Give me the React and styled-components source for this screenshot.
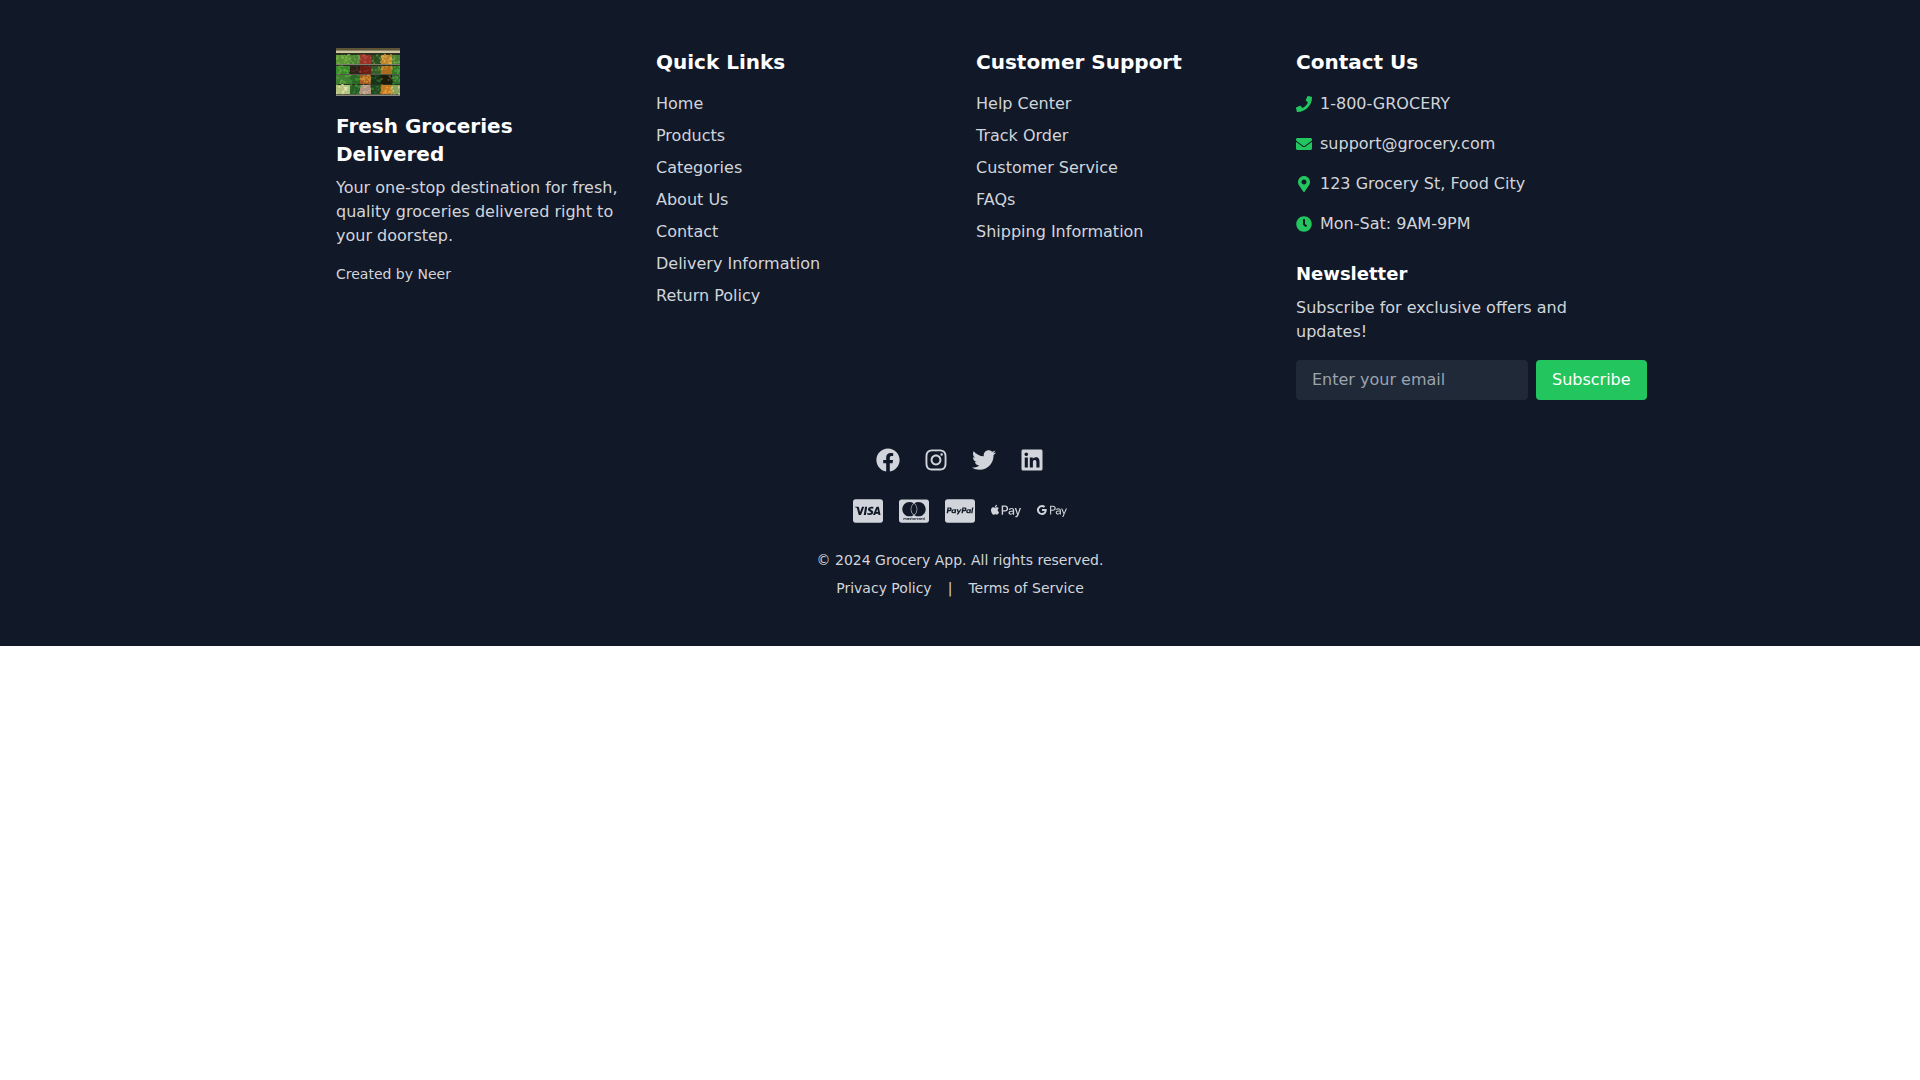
import React from 'react'
import styled, { createGlobalStyle } from 'styled-components'
import {
  FaPhone, FaEnvelope, FaMapMarkerAlt, FaClock, FaFacebook, FaInstagram, FaTwitter, FaLinkedin,
  FaCcVisa, FaCcMastercard, FaCcPaypal, FaApplePay, FaGooglePay,
} from 'react-icons/fa'

const quickLinks = ['Home', 'Products', 'Categories', 'About Us', 'Contact', 'Delivery Information', 'Return Policy']
const supportLinks = ['Help Center', 'Track Order', 'Customer Service', 'FAQs', 'Shipping Information']
const contacts = [
  [FaPhone, '1-800-GROCERY'],
  [FaEnvelope, 'support@grocery.com'],
  [FaMapMarkerAlt, '123 Grocery St, Food City'],
  [FaClock, 'Mon-Sat: 9AM-9PM'],
]
const socials = [FaFacebook, FaInstagram, FaTwitter, FaLinkedin]
const payments = [FaCcVisa, FaCcMastercard, FaCcPaypal, FaApplePay, FaGooglePay]

// produce on the shelves: [x, width, [row colours, light and dark tone]]
const shelfColumns = [
  [0, 14, [['#7fb24a', '#5a9636'], ['#58a83a', '#3a8a2c'], ['#63a544', '#3f8232'], ['#dfe3b0', '#b4c47e']]],
  [14, 10, [['#6da045', '#4a8236'], ['#4a3426', '#2e211a'], ['#3f8a34', '#2a6a28'], ['#3f8535', '#275f28']]],
  [24, 11, [['#bd4a3f', '#98352c'], ['#9c3028', '#6a2018'], ['#cf9030', '#a35a26'], ['#d0b49c', '#b09680']]],
  [35, 10, [['#5a8238', '#2f4f26'], ['#568238', '#35592a'], ['#2f5f2a', '#18351a'], ['#3a7432', '#214a22']]],
  [45, 11, [['#dcab42', '#bd8430'], ['#d0922c', '#ab6e1e'], ['#5c4e2c', '#1c1c10'], ['#e09c38', '#c47c24']]],
  [56, 8, [['#6fa548', '#4a8036'], ['#4a9a38', '#2f7a2a'], ['#4f9440', '#2c6a2a'], ['#ccd39a', '#8aa45e']]],
]
const shelfRows = [[7, 9], [18, 8], [27, 9], [37, 9]]

// small repeatable generator so the photo stays the same on every render
const seeded = seed => () => {
  seed = (seed * 16807) % 2147483647
  return seed / 2147483647
}

function shelfBlobs() {
  const random = seeded(41)
  const blobs = []
  shelfColumns.forEach(([x, w, rows]) => {
    rows.forEach(([light, dark], r) => {
      const [y, h] = shelfRows[r]
      const count = Math.round((w * h) / 4)
      for (let i = 0; i < count; i++) {
        blobs.push({
          cx: x + random() * w,
          cy: y + random() * h,
          r: 0.6 + random() * 0.7,
          fill: random() > 0.5 ? light : dark,
        })
      }
    })
  })
  return blobs
}
const blobs = shelfBlobs()

function ShelfPhoto() {
  return (
    <Logo viewBox="0 0 64 48" role="img" aria-label="Fresh Groceries Delivered">
      <filter id="soften"><feGaussianBlur stdDeviation="0.3" /></filter>
      <clipPath id="photo"><rect width="64" height="48" /></clipPath>
      <g clipPath="url(#photo)">
        <rect width="64" height="48" fill="#2a3020" />
        <g filter="url(#soften)">
          <rect width="64" height="2.5" fill="#5f5238" />
          <rect y="2.5" width="64" height="2.5" fill="#cfc6a0" />
          {shelfColumns.map(([x, w, rows]) =>
            rows.map(([, dark], r) => (
              <rect key={`${x}-${r}`} x={x} y={shelfRows[r][0]} width={w} height={shelfRows[r][1]} fill={dark} />
            ))
          )}
          {blobs.map((b, i) => <circle key={i} cx={b.cx} cy={b.cy} r={b.r} fill={b.fill} />)}
          <rect y="16" width="64" height="1" fill="#7d7d70" />
          <rect y="26" width="64" height="0.8" fill="#5f5f54" />
          <rect y="46.5" width="64" height="1.5" fill="#8a8a7c" />
        </g>
      </g>
    </Logo>
  )
}

function LinkColumn({ title, links }) {
  return (
    <div>
      <Heading>{title}</Heading>
      <LinkList>
        {links.map(link => (
          <li key={link}><FooterLink href="#">{link}</FooterLink></li>
        ))}
      </LinkList>
    </div>
  )
}

export default function App() {
  return (
    <>
      <GlobalStyle />
      <Footer>
        <Container>
          <Columns>
            <div>
              <ShelfPhoto />
              <Heading $tight>Fresh Groceries Delivered</Heading>
              <Blurb>Your one-stop destination for fresh, quality groceries delivered right to your doorstep.</Blurb>
              <Credit>Created by Neer</Credit>
            </div>
            <LinkColumn title="Quick Links" links={quickLinks} />
            <LinkColumn title="Customer Support" links={supportLinks} />
            <div>
              <Heading>Contact Us</Heading>
              <ContactList>
                {contacts.map(([Icon, text]) => (
                  <ContactItem key={text}>
                    <ContactIcon><Icon size={16} /></ContactIcon>
                    {text}
                  </ContactItem>
                ))}
              </ContactList>
              <NewsletterTitle>Newsletter</NewsletterTitle>
              <NewsletterText>Subscribe for exclusive offers and updates!</NewsletterText>
              <NewsletterForm onSubmit={e => e.preventDefault()}>
                <EmailInput type="email" placeholder="Enter your email" />
                <SubscribeButton type="submit">Subscribe</SubscribeButton>
              </NewsletterForm>
            </div>
          </Columns>
          <Socials>
            {socials.map((Icon, i) => (
              <SocialLink href="#" key={i}><Icon size={24} /></SocialLink>
            ))}
          </Socials>
          <Payments>
            {payments.map((Icon, i) => <Icon key={i} size={30} />)}
          </Payments>
          <Legal>
            <p>© 2024 Grocery App. All rights reserved.</p>
            <LegalLinks>
              <LegalLink href="#">Privacy Policy</LegalLink>
              <span>|</span>
              <LegalLink href="#">Terms of Service</LegalLink>
            </LegalLinks>
          </Legal>
        </Container>
      </Footer>
    </>
  )
}

const GlobalStyle = createGlobalStyle`
  html, body { margin: 0; padding: 0; background: #fff; }
  body {
    font-family: "DejaVu Sans", sans-serif;
    font-size: 16px;
    line-height: 24px;
    -webkit-font-smoothing: antialiased;
    -moz-osx-font-smoothing: grayscale;
  }
  * { box-sizing: border-box; }
`
const Footer = styled.footer`
  background: #111827;
  color: #d1d5db;
  padding: 48px 0;
`
const Container = styled.div`
  max-width: 1280px;
  margin: 0 auto;
  padding: 0 16px;
`
const Columns = styled.div`
  display: grid;
  grid-template-columns: repeat(4, minmax(0, 1fr));
  gap: 32px;
  margin-bottom: 48px;
`
const Logo = styled.svg`
  display: block;
  width: 64px;
  height: 48px;
  margin-bottom: 16px;
`
const Heading = styled.h3`
  margin: 0 0 ${p => (p.$tight ? '8px' : '16px')};
  color: #fff;
  font-size: 20px;
  line-height: 28px;
  font-weight: 700;
`
const Blurb = styled.p`
  margin: 0;
`
const Credit = styled.p`
  margin: 16px 0 0;
  font-size: 14px;
  line-height: 20px;
`
const LinkList = styled.ul`
  list-style: none;
  margin: 0;
  padding: 0;
  display: flex;
  flex-direction: column;
  gap: 8px;
`
const FooterLink = styled.a`
  color: #d1d5db;
  text-decoration: none;
`
const ContactList = styled.ul`
  list-style: none;
  margin: 0 0 24px;
  padding: 0;
  display: flex;
  flex-direction: column;
  gap: 16px;
`
const ContactItem = styled.li`
  display: flex;
  align-items: center;
  gap: 8px;
`
const ContactIcon = styled.span`
  display: flex;
  color: #22c55e;
`
const NewsletterTitle = styled.h4`
  margin: 0 0 8px;
  color: #fff;
  font-size: 18px;
  line-height: 28px;
  font-weight: 700;
`
const NewsletterText = styled.p`
  margin: 0 0 16px;
`
const NewsletterForm = styled.form`
  display: flex;
  gap: 8px;
`
const EmailInput = styled.input`
  flex: none;
  width: 232px;
  height: 40px;
  padding: 7px 16px 9px;
  border: 0;
  border-radius: 4px;
  background: #1f2937;
  color: #fff;
  font-family: inherit;
  font-size: 16px;
  line-height: 24px;
  &::placeholder { color: #9ca3af; opacity: 1; }
`
const SubscribeButton = styled.button`
  flex: none;
  height: 40px;
  padding: 8px 16px;
  border: 0;
  border-radius: 4px;
  background: #22c55e;
  color: #fff;
  font: inherit;
`
const Socials = styled.div`
  display: flex;
  justify-content: center;
  gap: 24px;
  margin-bottom: 24px;
`
const SocialLink = styled.a`
  display: flex;
  color: #d1d5db;
`
const Payments = styled.div`
  display: flex;
  justify-content: center;
  gap: 16px;
  margin-bottom: 24px;
`
const Legal = styled.div`
  text-align: center;
  font-size: 14px;
  line-height: 20px;
  p { margin: 0; }
`
const LegalLinks = styled.div`
  display: flex;
  justify-content: center;
  gap: 16px;
  margin-top: 8px;
`
const LegalLink = styled.a`
  color: #d1d5db;
  text-decoration: none;
`
